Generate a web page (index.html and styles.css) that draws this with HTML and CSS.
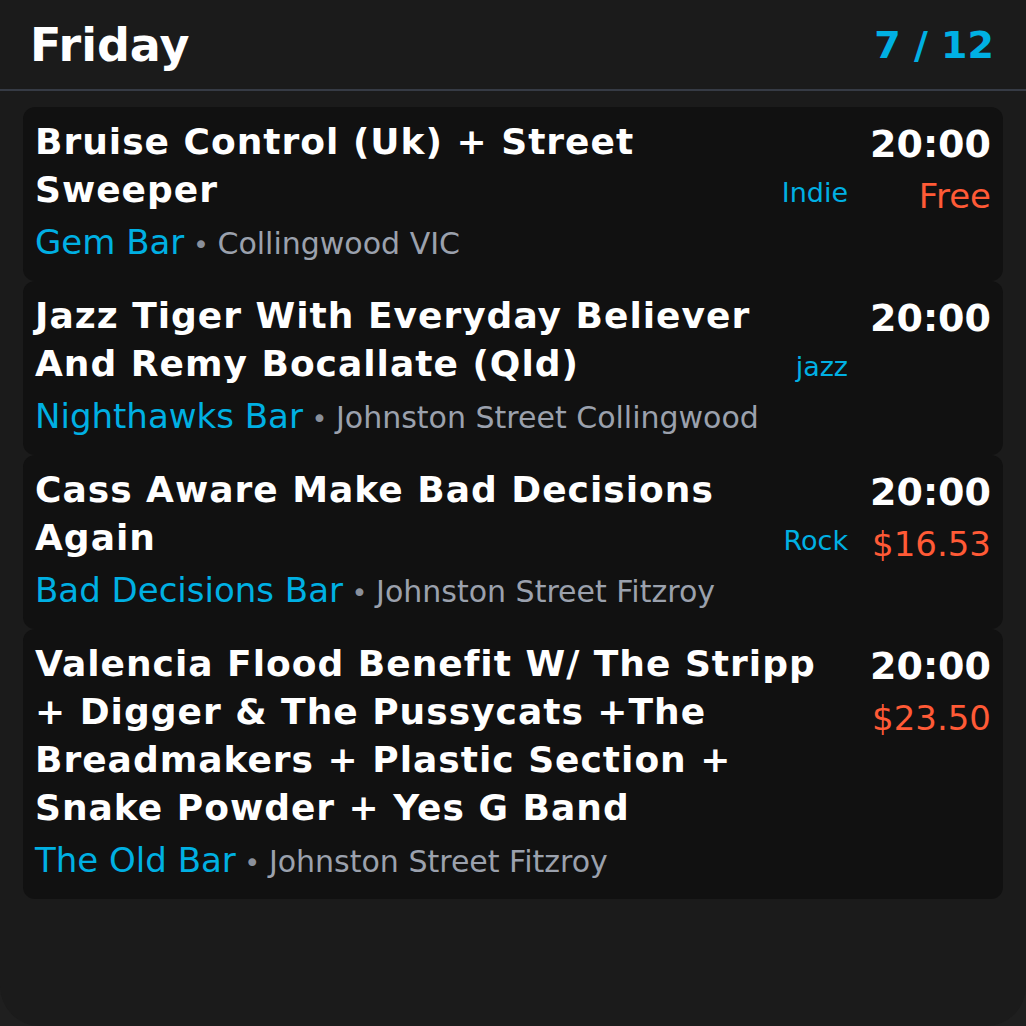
FILE: index.html
```html
<!DOCTYPE html>
<html>
<head>
<meta charset="utf-8">
<link rel="stylesheet" href="styles.css">
</head>
<body>
<div class="panel">
  <header class="header">
    <h1 class="day">Friday</h1>
    <div class="count">7 / 12</div>
  </header>
  <div class="list">
    <div class="card">
      <div class="main">
        <div class="title">Bruise Control (Uk) + Street Sweeper</div>
        <div class="venue"><span class="vname">Gem Bar</span><span class="sep"> • </span><span class="addr">Collingwood VIC</span></div>
      </div>
      <div class="tag">Indie</div>
      <div class="side">
        <div class="time">20:00</div>
        <div class="price">Free</div>
      </div>
    </div>
    <div class="card">
      <div class="main">
        <div class="title">Jazz Tiger With Everyday Believer And Remy Bocallate (Qld)</div>
        <div class="venue"><span class="vname">Nighthawks Bar</span><span class="sep"> • </span><span class="addr">Johnston Street Collingwood</span></div>
      </div>
      <div class="tag">jazz</div>
      <div class="side">
        <div class="time">20:00</div>
      </div>
    </div>
    <div class="card">
      <div class="main">
        <div class="title">Cass Aware Make Bad Decisions Again</div>
        <div class="venue"><span class="vname">Bad Decisions Bar</span><span class="sep"> • </span><span class="addr">Johnston Street Fitzroy</span></div>
      </div>
      <div class="tag">Rock</div>
      <div class="side">
        <div class="time">20:00</div>
        <div class="price">$16.53</div>
      </div>
    </div>
    <div class="card">
      <div class="main">
        <div class="title">Valencia Flood Benefit W/ The Stripp + Digger &amp; The Pussycats +The Breadmakers + Plastic Section + Snake Powder + Yes G Band</div>
        <div class="venue"><span class="vname">The Old Bar</span><span class="sep"> • </span><span class="addr">Johnston Street Fitzroy</span></div>
      </div>
      <div class="tag"></div>
      <div class="side">
        <div class="time">20:00</div>
        <div class="price">$23.50</div>
      </div>
    </div>
  </div>
</div>
</body>
</html>
```

FILE: styles.css
```css
html, body {
  margin: 0;
  padding: 0;
  background: #1f1f1f;
}
body {
  font-family: "DejaVu Sans", sans-serif;
  color: #ffffff;
  width: 1026px;
  height: 1026px;
  overflow: hidden;
}
.panel {
  width: 1026px;
  height: 1026px;
  background: #1b1b1b;
  border-radius: 0 0 40px 40px;
  box-sizing: border-box;
}
.header {
  height: 89px;
  display: flex;
  align-items: center;
  justify-content: space-between;
  padding: 0 32px 0 30px;
  border-bottom: 2px solid #363b45;
  box-sizing: content-box;
}
.day {
  margin: 0;
  font-size: 46px;
  font-weight: bold;
  line-height: 1;
  color: #ffffff;
}
.count {
  font-size: 38px;
  font-weight: bold;
  color: #00b0e3;
  line-height: 1;
}
.list {
  padding: 16px 23px 0;
  display: flex;
  flex-direction: column;
}
.card {
  background: #111111;
  border-radius: 12px;
  padding: 11px 12px 15px;
  display: flex;
  align-items: flex-start;
  gap: 24px;
}
.main {
  flex: 1;
  min-width: 0;
}
.title {
  font-size: 36px;
  font-weight: bold;
  line-height: 48px;
  letter-spacing: 1px;
  color: #ffffff;
}
.venue {
  margin-top: 5px;
  height: 47px;
  line-height: 47px;
  font-size: 34px;
  color: #9ba1ad;
}
.vname {
  line-height: 1;
  color: #00b0e3;
}
.sep {
  font-size: 27px;
  line-height: 1;
  color: #8a909b;
}
.addr {
  font-size: 30px;
  line-height: 1;
}
.tag {
  align-self: center;
  font-size: 27px;
  color: #00b0e3;
  text-align: right;
  margin-right: -2px;
}
.side {
  display: flex;
  flex-direction: column;
  align-items: flex-end;
}
.time {
  font-size: 38px;
  font-weight: bold;
  line-height: 1.4;
}
.price {
  font-size: 34px;
  line-height: 1.5;
  color: #ff5a36;
}
```
